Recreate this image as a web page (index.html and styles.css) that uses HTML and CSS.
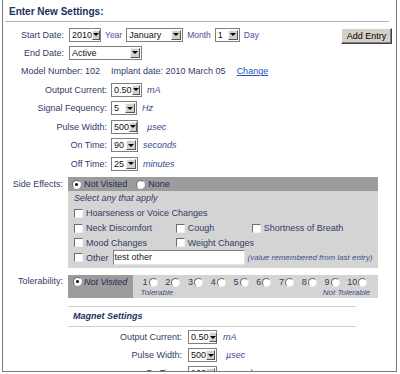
FILE: index.html
```html
<!DOCTYPE html>
<html lang="en">
<head>
  <meta charset="UTF-8">
  <title>Enter New Settings</title>
  <meta name="viewport" content="width=device-width, initial-scale=1.0">
  <link rel="stylesheet" href="styles.css">
</head>
<body>
<div class="page">
  <h2 class="title">Enter New Settings:</h2>

  <div class="row row-date first">
    <span class="lbl">Start Date:</span>
    <div class="fields">
      <span class="sel" style="width:32px">2010<i class="arr"></i></span><span class="unit">Year</span>
      <span class="sel" style="width:57px">January<i class="arr"></i></span><span class="unit">Month</span>
      <span class="sel" style="width:25px">1<i class="arr"></i></span><span class="unit">Day</span>
    </div>
    <button class="btn" type="button">Add Entry</button>
  </div>

  <div class="row row-date">
    <span class="lbl">End Date:</span>
    <div class="fields">
      <span class="sel" style="width:73px">Active<i class="arr"></i></span>
    </div>
  </div>

  <div class="row row-model">
    <span>Model Number: 102</span>
    <span class="gap">Implant date: 2010 March 05</span>
    <a class="link gap" href="#">Change</a>
  </div>

  <div class="row row-stim">
    <span class="lbl">Output Current:</span>
    <div class="fields">
      <span class="sel" style="width:31px">0.50<i class="arr"></i></span><span class="u">mA</span>
    </div>
  </div>
  <div class="row row-stim">
    <span class="lbl">Signal Fequency:</span>
    <div class="fields">
      <span class="sel" style="width:26px">5<i class="arr"></i></span><span class="u">Hz</span>
    </div>
  </div>
  <div class="row row-stim">
    <span class="lbl">Pulse Width:</span>
    <div class="fields">
      <span class="sel" style="width:27px">500<i class="arr"></i></span><span class="u wide">µsec</span>
    </div>
  </div>
  <div class="row row-stim">
    <span class="lbl">On Time:</span>
    <div class="fields">
      <span class="sel" style="width:27px">90<i class="arr"></i></span><span class="u">seconds</span>
    </div>
  </div>
  <div class="row row-stim">
    <span class="lbl">Off Time:</span>
    <div class="fields">
      <span class="sel" style="width:27px">25<i class="arr"></i></span><span class="u">minutes</span>
    </div>
  </div>

  <!-- side effects -->
  <div class="row-se">
    <span class="lbl">Side Effects:</span>
    <div class="se-box">
      <div class="se-head">
        <span class="opt"><i class="rad on"></i>Not Visited</span>
        <span class="opt"><i class="rad"></i>None</span>
      </div>
      <div class="se-body">
        <div class="hint">Select any that apply</div>
        <div class="checks">
          <span class="ci full"><i class="chk"></i>Hoarseness or Voice Changes</span>
          <span class="ci"><i class="chk"></i>Neck Discomfort</span>
          <span class="ci"><i class="chk"></i>Cough</span>
          <span class="ci"><i class="chk"></i>Shortness of Breath</span>
          <span class="ci"><i class="chk"></i>Mood Changes</span>
          <span class="ci span2"><i class="chk"></i>Weight Changes</span>
          <span class="ci full"><i class="chk"></i>Other<span class="txt">test other</span><span class="note">(value remembered from last entry)</span></span>
        </div>
      </div>
    </div>
  </div>

  <!-- tolerability -->
  <div class="row-se row-tol">
    <span class="lbl">Tolerability:</span>
    <div class="tol">
      <div class="tol-nv"><i class="rad on"></i>Not Visited</div>
      <div class="tol-scale">
        <div class="nums">
          <span class="num">1<i class="rad"></i></span>
          <span class="num">2<i class="rad"></i></span>
          <span class="num">3<i class="rad"></i></span>
          <span class="num">4<i class="rad"></i></span>
          <span class="num">5<i class="rad"></i></span>
          <span class="num">6<i class="rad"></i></span>
          <span class="num">7<i class="rad"></i></span>
          <span class="num">8<i class="rad"></i></span>
          <span class="num">9<i class="rad"></i></span>
          <span class="num">10<i class="rad"></i></span>
        </div>
        <div class="ends"><span>Tolerable</span><span>Not Tolerable</span></div>
      </div>
    </div>
  </div>

  <!-- magnet -->
  <div class="magnet">
    <div class="mag-title">Magnet Settings</div>
    <div class="row row-mag first-mag">
      <span class="lbl">Output Current:</span>
      <div class="fields">
        <span class="sel" style="width:29px">0.50<i class="arr"></i></span><span class="u mag-u">mA</span>
      </div>
    </div>
    <div class="row row-mag">
      <span class="lbl">Pulse Width:</span>
      <div class="fields">
        <span class="sel" style="width:29px">500<i class="arr"></i></span><span class="u wide">µsec</span>
      </div>
    </div>
    <div class="row row-mag">
      <span class="lbl">On Time:</span>
      <div class="fields">
        <span class="sel" style="width:29px">120<i class="arr"></i></span><span class="u mag-u">seconds</span>
      </div>
    </div>
  </div>
</div>
</body>
</html>
```

FILE: styles.css
```css
body {
  margin: 0;
  font-family: "Liberation Sans", Arial, sans-serif;
  font-size: 9px;
  color: #333b66;
  background: #fff;
}
.page {
  margin-left: 2px;
  width: 395px;
  height: 372px;
  box-sizing: border-box;
  border: 1px solid #7a7a7a;
  border-top: none;
  padding: 0 4px 0 2px;
  overflow: hidden;
}
.title {
  margin: 0 3px 0 0;
  padding: 4px 0 0 4px;
  height: 17px;
  line-height: 16px;
  font-size: 10px;
  font-weight: bold;
  color: #1c2f5e;
  border-bottom: 1px solid #b4b4b4;
}
.row {
  display: grid;
  align-items: center;
  height: 18.5px;
  white-space: nowrap;
}
.first {
  margin-top: 3px;
}
.row-date {
  grid-template-columns: 59px 1fr auto;
  column-gap: 5px;
}
.row-stim {
  grid-template-columns: 102px 1fr;
  column-gap: 4px;
}
.row-model {
  display: flex;
  padding-left: 16px;
}
.row-model .gap {
  margin-left: 11px;
}
.link {
  color: #2251c4;
  text-decoration: underline;
}
.lbl {
  text-align: right;
  white-space: nowrap;
}
.fields {
  display: flex;
  align-items: center;
}

/* fake selects */
.sel {
  display: inline-flex;
  align-items: center;
  height: 14px;
  box-sizing: border-box;
  border: 1px solid #7f7f7f;
  background: #fff;
  color: #111;
  padding-left: 2px;
  flex: none;
}
.arr {
  display: flex;
  align-items: center;
  justify-content: center;
  margin-left: auto;
  margin-right: 1px;
  width: 10px;
  height: 10px;
  box-sizing: border-box;
  background: #d4d0c8;
  border: 1px solid;
  border-color: #f4f4f4 #555 #555 #f4f4f4;
}
.arr::before {
  content: "";
  border-left: 3px solid transparent;
  border-right: 3px solid transparent;
  border-top: 3px solid #000;
}
.unit {
  font-size: 8.5px;
  color: #4d4d9a;
  margin: 0 4px;
}
.u {
  font-style: italic;
  color: #3b4a8c;
  margin-left: 5px;
}
.u.wide {
  margin-left: 9px;
}
.btn {
  justify-self: end;
  align-self: start;
  margin-top: 3px;
  width: 51px;
  height: 16px;
  padding: 0;
  font: 9px "Liberation Sans", Arial, sans-serif;
  color: #000;
  background: #d4d0c8;
  border: 1px solid;
  border-color: #fff #404040 #404040 #fff;
  box-shadow: inset -1px -1px #808080;
}

/* radios + checkboxes */
.rad {
  display: inline-flex;
  align-items: center;
  justify-content: center;
  width: 9px;
  height: 9px;
  box-sizing: border-box;
  border-radius: 50%;
  background: #fff;
  border: 1px solid;
  border-color: #6e6e6e #ececec #ececec #6e6e6e;
  flex: none;
}
.rad.on::after {
  content: "";
  width: 3px;
  height: 3px;
  border-radius: 50%;
  background: #000;
}
.chk {
  display: inline-block;
  width: 9px;
  height: 9px;
  box-sizing: border-box;
  background: #fff;
  border: 1px solid;
  border-color: #6e6e6e #f0f0f0 #f0f0f0 #6e6e6e;
  margin-right: 3px;
  flex: none;
}

/* side effects */
.row-se {
  display: grid;
  grid-template-columns: 58px 310px;
  column-gap: 5px;
  align-items: start;
  margin-top: 4px;
}
.row-se > .lbl {
  line-height: 14px;
}
.se-head {
  display: flex;
  align-items: center;
  height: 14px;
  padding-left: 4px;
  background: #9c9c9c;
  color: #1f2a55;
}
.opt {
  display: inline-flex;
  align-items: center;
  gap: 3px;
  margin-right: 9px;
}
.se-body {
  background: #d4d4d4;
  padding: 0 0 3px 6px;
}
.hint {
  font-style: italic;
  line-height: 15px;
}
.checks {
  display: grid;
  grid-template-columns: 101.7px 76px 1fr;
  grid-auto-rows: 14.75px;
  align-items: center;
}
.ci {
  display: flex;
  align-items: center;
  white-space: nowrap;
}
.full {
  grid-column: 1 / -1;
}
.span2 {
  grid-column: 2 / -1;
}
.txt {
  display: inline-block;
  width: 132px;
  height: 15px;
  box-sizing: border-box;
  margin-left: 4px;
  padding-left: 1px;
  line-height: 13px;
  background: #fff;
  border: 1px solid;
  border-color: #808080 #e4e4e4 #e4e4e4 #808080;
  color: #222;
}
.note {
  margin-left: 3px;
  font-size: 8px;
  font-style: italic;
  color: #3d4d8c;
}

/* tolerability */
.row-tol {
  margin-top: 7px;
}
.row-tol > .lbl {
  line-height: 12px;
}
.tol {
  display: flex;
  height: 23px;
}
.tol-nv {
  width: 68px;
  box-sizing: border-box;
  display: flex;
  align-items: center;
  align-self: stretch;
  gap: 2px;
  height: 23px;
  padding: 0 0 10px 5px;
  background: #9c9c9c;
  font-style: italic;
  color: #1f2a55;
}
.tol-scale {
  flex: 1;
  padding: 1px 8px 0 10px;
  background: #d4d4d4;
}
.nums {
  display: flex;
  align-items: center;
  height: 12px;
}
.num {
  flex: none;
  width: 22.75px;
  display: flex;
  align-items: center;
  gap: 1px;
}
.ends {
  display: flex;
  justify-content: space-between;
  margin-left: -2px;
  font-size: 8px;
  font-style: italic;
  line-height: 9px;
  color: #3d4d8c;
}

/* magnet */
.magnet {
  margin: 8px 0 0 63px;
  width: 288px;
}
.mag-title {
  height: 19px;
  line-height: 19px;
  padding-left: 5px;
  border-top: 1px solid #cfcfcf;
  border-bottom: 1px solid #cfcfcf;
  font-weight: bold;
  font-style: italic;
  color: #1c2f5e;
}
.row-mag {
  grid-template-columns: 114px 1fr;
  column-gap: 6px;
  height: 18px;
}
.first-mag {
  margin-top: 1px;
}
.mag-u {
  margin-left: 6px;
}
```
